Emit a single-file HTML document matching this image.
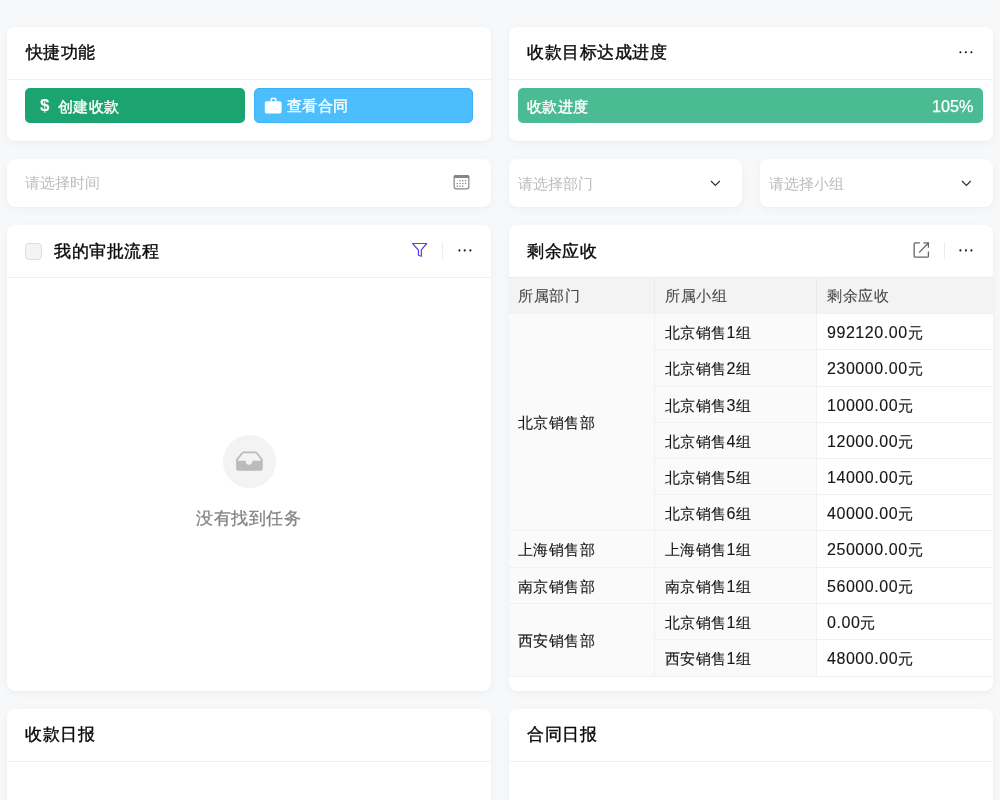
<!DOCTYPE html>
<html><head><meta charset="utf-8">
<style>
*{box-sizing:border-box;margin:0;padding:0}
html,body{width:1000px;height:800px;overflow:hidden;background:#f7f8fa;font-family:"Liberation Sans",sans-serif;color:#1a1a1a}
body{position:relative;will-change:transform}
.card{position:absolute;background:#fff;border-radius:8px;box-shadow:0 1px 2px rgba(30,40,60,0.025),0 2px 9px rgba(30,40,60,0.04)}
.line{position:absolute;height:1px;background:#f0f0f0}
.t{position:absolute;white-space:nowrap;line-height:20px}
.title{font-size:17px;letter-spacing:0.55px;color:#0a0a0a;-webkit-text-stroke:0.38px #0a0a0a}
.dots{position:absolute;width:16px;height:4px}
.dots i{position:absolute;top:0;width:1.8px;height:1.8px;border-radius:1px;background:#2a2a2a}
.ph{font-size:15px;letter-spacing:0.1px;color:#bdbdbd}
.vdiv{position:absolute;width:1px;height:17px;background:#ececec}
.tb{font-size:15px;letter-spacing:0.4px;color:#161616;-webkit-text-stroke:0.12px #161616}
.th{font-size:15px;letter-spacing:0.5px;color:#474747;-webkit-text-stroke:0.1px #474747}
.n{font-size:16px;letter-spacing:0.55px}
.g{position:absolute;background:#fafafa}
.vl{position:absolute;width:1px;background:#f1f1f1}
.hl{position:absolute;height:1px;background:#f1f1f1}
</style></head><body>

<!-- ===== Card A ===== -->
<div class="card" style="left:7px;top:27px;width:484px;height:114px"></div>
<div class="line" style="left:7px;top:79px;width:484px"></div>
<div class="t title" style="left:25.8px;top:43px">快捷功能</div>
<div style="position:absolute;left:25px;top:88px;width:220px;height:34.5px;border-radius:5px;background:#1ba46f"></div>
<div class="t" style="left:40px;top:96px;font-size:17px;font-weight:bold;color:#fff">$</div>
<div class="t" style="left:58px;top:97px;font-size:15px;letter-spacing:0.45px;color:#fff;-webkit-text-stroke:0.4px #fff">创建收款</div>
<div style="position:absolute;left:254px;top:88px;width:219px;height:34.5px;border-radius:5px;background:#4cbefd;border:1px solid #3bb3f7"></div>
<svg style="position:absolute;left:264px;top:97px" width="19" height="18" viewBox="0 0 19 18">
  <path d="M7.2 4.2V2.4Q7.2 1.6 8 1.6H11Q11.8 1.6 11.8 2.4V4.2" fill="none" stroke="#fff" stroke-width="1.5"/>
  <rect x="0.8" y="4.3" width="16.8" height="12.3" rx="1.8" fill="#fff"/>
</svg>
<div class="t" style="left:287px;top:96px;font-size:15px;letter-spacing:0.45px;color:#fff;-webkit-text-stroke:0.4px #fff">查看合同</div>

<!-- ===== Card B ===== -->
<div class="card" style="left:509px;top:27px;width:484px;height:114px"></div>
<div class="line" style="left:509px;top:79px;width:484px"></div>
<div class="t title" style="left:527px;top:43px">收款目标达成进度</div>
<svg style="position:absolute;left:957px;top:49px" width="20" height="6" viewBox="0 0 20 6" fill="#141414"><circle cx="3.4" cy="3.25" r="1.05"/><circle cx="8.9" cy="3.25" r="1.05"/><circle cx="14.4" cy="3.25" r="1.05"/></svg>
<div style="position:absolute;left:518px;top:88px;width:465px;height:34.5px;border-radius:5px;background:#4abb92"></div>
<div class="t" style="left:527px;top:97px;font-size:15px;letter-spacing:0.45px;color:#fff;-webkit-text-stroke:0.4px #fff">收款进度</div>
<div class="t" style="left:932px;top:96px;font-size:16.2px;color:#fff;-webkit-text-stroke:0.25px #fff">105%</div>

<!-- ===== Date picker ===== -->
<div class="card" style="left:7px;top:159px;width:484px;height:48px"></div>
<div class="t ph" style="left:24.5px;top:173px">请选择时间</div>
<svg style="position:absolute;left:453px;top:174px" width="17" height="16" viewBox="0 0 17 16">
  <rect x="1.15" y="1.55" width="14.7" height="13.4" rx="2.4" fill="none" stroke="#868686" stroke-width="1.2"/>
  <rect x="0.6" y="0.9" width="15.8" height="3.2" rx="1.6" fill="#868686"/>
  <g fill="#868686">
    <rect x="6.4" y="6" width="1.3" height="1.3"/><rect x="9.15" y="6" width="1.3" height="1.3"/><rect x="11.9" y="6" width="1.3" height="1.3"/>
    <rect x="3.65" y="8.85" width="1.3" height="1.3"/><rect x="6.4" y="8.85" width="1.3" height="1.3"/><rect x="9.15" y="8.85" width="1.3" height="1.3"/><rect x="11.9" y="8.85" width="1.3" height="1.3"/>
    <rect x="3.65" y="11.6" width="1.3" height="1.3"/><rect x="6.4" y="11.6" width="1.3" height="1.3"/><rect x="9.15" y="11.6" width="1.3" height="1.3"/>
  </g>
</svg>

<!-- ===== Selects ===== -->
<div class="card" style="left:509px;top:159px;width:233px;height:48px"></div>
<div class="t ph" style="left:518px;top:174px">请选择部门</div>
<svg style="position:absolute;left:709px;top:179.3px" width="13" height="9" viewBox="0 0 13 9"><path d="M2 2L6.4 6.5L10.8 2" fill="none" stroke="#2e2e2e" stroke-width="1.15"/></svg>
<div class="card" style="left:760px;top:159px;width:233px;height:48px"></div>
<div class="t ph" style="left:769px;top:174px">请选择小组</div>
<svg style="position:absolute;left:960px;top:179.3px" width="13" height="9" viewBox="0 0 13 9"><path d="M2 2L6.4 6.5L10.8 2" fill="none" stroke="#2e2e2e" stroke-width="1.15"/></svg>

<!-- ===== Card C approvals ===== -->
<div class="card" style="left:7px;top:225px;width:484px;height:466px"></div>
<div class="line" style="left:7px;top:277px;width:484px"></div>
<div style="position:absolute;left:25.3px;top:242.5px;width:17px;height:17px;border:1px solid #dedede;background:#f4f4f4;border-radius:4px"></div>
<div class="t title" style="left:54px;top:241.5px">我的审批流程</div>
<svg style="position:absolute;left:408px;top:239px" width="24" height="22" viewBox="0 0 24 22"><path d="M4.6 4.5H18.7L13.3 10.9V17.3L10.4 16.2V11.1Z" fill="none" stroke="#5140f5" stroke-width="1.2" stroke-linejoin="round"/></svg>
<div class="vdiv" style="left:442px;top:242px"></div>
<svg style="position:absolute;left:456px;top:247px" width="20" height="6" viewBox="0 0 20 6" fill="#141414"><circle cx="3.4" cy="3.4" r="1.05"/><circle cx="8.7" cy="3.4" r="1.05"/><circle cx="14.4" cy="3.4" r="1.05"/></svg>
<div style="position:absolute;left:223px;top:435.3px;width:53px;height:53px;border-radius:50%;background:#f3f3f3"></div>
<svg style="position:absolute;left:232px;top:446px" width="36" height="30" viewBox="0 0 36 30">
  <path d="M5 15V13.6L10.1 7.3Q10.7 6.45 11.7 6.45H23.3Q24.3 6.45 24.9 7.3L29.85 13.6V15" fill="none" stroke="#bbb" stroke-width="1.8" stroke-linejoin="round"/>
  <path d="M4.1 14.8H13.7A3.35 3.95 0 0 0 20.4 14.8H30.75V22.2Q30.75 24.75 28.2 24.75H6.65Q4.1 24.75 4.1 22.2Z" fill="#bbb"/>
</svg>
<div class="t" style="left:196px;top:509px;font-size:17px;letter-spacing:0.55px;color:#858585;-webkit-text-stroke:0.3px #858585">没有找到任务</div>

<!-- ===== Card D remaining ===== -->
<div class="card" style="left:509px;top:225px;width:484px;height:466px"></div>
<div class="t title" style="left:527px;top:241.5px">剩余应收</div>
<svg style="position:absolute;left:908px;top:238px" width="26" height="24" viewBox="0 0 26 24" fill="none" stroke="#666" stroke-width="1.3">
  <path d="M11.85 4.95H7.15Q6.15 4.95 6.15 5.95V18.2Q6.15 19.2 7.15 19.2H19.4Q20.4 19.2 20.4 18.2V13.5"/>
  <path d="M15.45 4.95H20.4V9.75"/>
  <path d="M11.1 14.6L20.1 5.3"/>
</svg>
<div class="vdiv" style="left:944px;top:242px"></div>
<svg style="position:absolute;left:957px;top:247px" width="20" height="6" viewBox="0 0 20 6" fill="#141414"><circle cx="3.4" cy="3.4" r="1.05"/><circle cx="8.9" cy="3.4" r="1.05"/><circle cx="14.4" cy="3.4" r="1.05"/></svg>

<!-- table -->
<div style="position:absolute;left:509px;top:277px;width:484px;height:36px;background:#f3f3f3"></div>
<div class="hl" style="left:509px;top:277px;width:484px;background:#ececec"></div>
<div class="vl" style="left:654px;top:278px;height:35px;background:#e9e9e9"></div>
<div class="vl" style="left:816px;top:278px;height:35px;background:#e9e9e9"></div>
<div class="g" style="left:509px;top:313px;width:307px;height:363px"></div>
<div class="vl" style="left:654px;top:313px;height:363px"></div>
<div class="vl" style="left:816px;top:313px;height:363px"></div>
<div class="hl" style="left:509px;top:313px;width:484px"></div>
<div class="hl" style="left:654px;top:349px;width:339px"></div>
<div class="hl" style="left:654px;top:386px;width:339px"></div>
<div class="hl" style="left:654px;top:422px;width:339px"></div>
<div class="hl" style="left:654px;top:458px;width:339px"></div>
<div class="hl" style="left:654px;top:494px;width:339px"></div>
<div class="hl" style="left:509px;top:530px;width:484px"></div>
<div class="hl" style="left:509px;top:567px;width:484px"></div>
<div class="hl" style="left:509px;top:603px;width:484px"></div>
<div class="hl" style="left:654px;top:639px;width:339px"></div>
<div class="hl" style="left:509px;top:676px;width:484px"></div>

<div class="t th" style="left:518px;top:286px">所属部门</div>
<div class="t th" style="left:665px;top:286px">所属小组</div>
<div class="t th" style="left:827px;top:286px">剩余应收</div>

<div class="t tb" style="left:518px;top:413px">北京销售部</div>
<div class="t tb" style="left:518px;top:540px">上海销售部</div>
<div class="t tb" style="left:518px;top:577px">南京销售部</div>
<div class="t tb" style="left:518px;top:631px">西安销售部</div>

<div class="t tb" style="left:665px;top:323px">北京销售<span class="n">1</span>组</div>
<div class="t tb" style="left:665px;top:359px">北京销售<span class="n">2</span>组</div>
<div class="t tb" style="left:665px;top:396px">北京销售<span class="n">3</span>组</div>
<div class="t tb" style="left:665px;top:432px">北京销售<span class="n">4</span>组</div>
<div class="t tb" style="left:665px;top:468px">北京销售<span class="n">5</span>组</div>
<div class="t tb" style="left:665px;top:504px">北京销售<span class="n">6</span>组</div>
<div class="t tb" style="left:665px;top:540px">上海销售<span class="n">1</span>组</div>
<div class="t tb" style="left:665px;top:577px">南京销售<span class="n">1</span>组</div>
<div class="t tb" style="left:665px;top:613px">北京销售<span class="n">1</span>组</div>
<div class="t tb" style="left:665px;top:649px">西安销售<span class="n">1</span>组</div>

<div class="t tb" style="left:827px;top:323px"><span class="n">992120.00</span>元</div>
<div class="t tb" style="left:827px;top:359px"><span class="n">230000.00</span>元</div>
<div class="t tb" style="left:827px;top:396px"><span class="n">10000.00</span>元</div>
<div class="t tb" style="left:827px;top:432px"><span class="n">12000.00</span>元</div>
<div class="t tb" style="left:827px;top:468px"><span class="n">14000.00</span>元</div>
<div class="t tb" style="left:827px;top:504px"><span class="n">40000.00</span>元</div>
<div class="t tb" style="left:827px;top:540px"><span class="n">250000.00</span>元</div>
<div class="t tb" style="left:827px;top:577px"><span class="n">56000.00</span>元</div>
<div class="t tb" style="left:827px;top:613px"><span class="n">0.00</span>元</div>
<div class="t tb" style="left:827px;top:649px"><span class="n">48000.00</span>元</div>

<!-- ===== Card E / F ===== -->
<div class="card" style="left:7px;top:709px;width:484px;height:120px"></div>
<div class="line" style="left:7px;top:761px;width:484px"></div>
<div class="t title" style="left:25px;top:725px">收款日报</div>
<div class="card" style="left:509px;top:709px;width:484px;height:120px"></div>
<div class="line" style="left:509px;top:761px;width:484px"></div>
<div class="t title" style="left:527px;top:725px">合同日报</div>

</body></html>
